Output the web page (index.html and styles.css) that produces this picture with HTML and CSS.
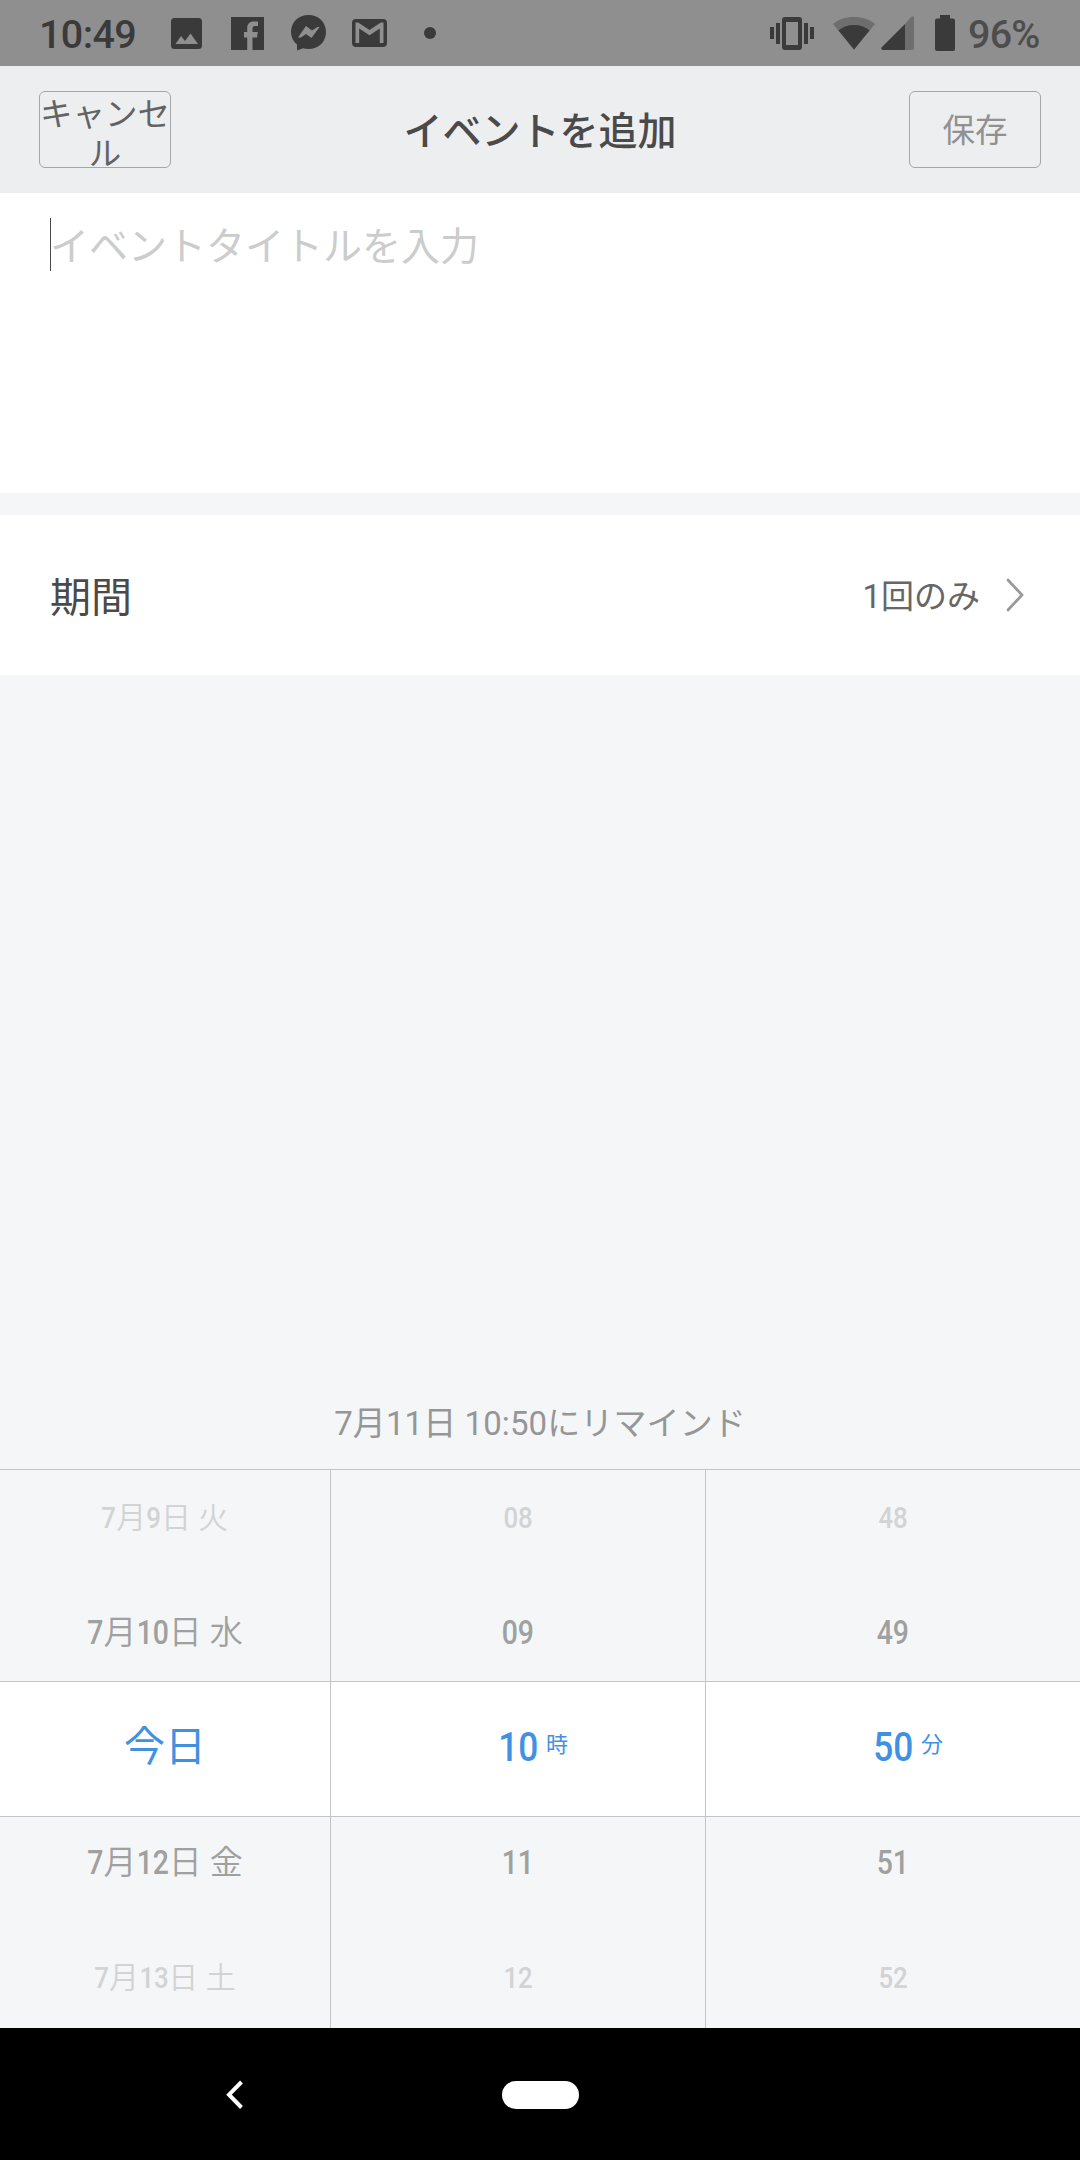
FILE: index.html
```
<!DOCTYPE html>
<html lang="ja">
<head>
  <meta charset="UTF-8">
  <meta name="viewport" content="width=device-width, initial-scale=1.0">
  <title>イベントを追加</title>
  <link rel="stylesheet" href="styles.css">
</head>
<body>
<div class="status-bar">
  <div class="status-left">
    <span class="clock">10:49</span>
    <svg class="icon-image" width="31" height="31" viewBox="0 0 31 31">
      <path fill-rule="evenodd" d="M3.500 0h24A3.500 3.500 0 0 1 31 3.500v24A3.500 3.500 0 0 1 27.500 31h-24A3.500 3.500 0 0 1 0 27.500v-24A3.500 3.500 0 0 1 3.500 0zM4.500 26H27l-7.500-10.500-5.500 7.500-4-5z"/>
    </svg>
    <svg class="icon-facebook" width="33" height="33" viewBox="0 0 33 33">
      <path d="M0 0h33v33H21.500V20.500h4.500l.8-5.500h-5.300v-3.500c0-1.700.8-2.500 2.400-2.500H27V4.500h-4.200c-4.300 0-6.600 2.400-6.600 6.500v4H13v5.500h3.200V33H0z"/>
    </svg>
    <svg class="icon-messenger" width="35" height="36" viewBox="0 0 35 36">
      <path fill-rule="evenodd" d="M17.500 0C27.500 0 35 7.300 35 17s-7.500 17-17.500 17c-2 0-3.700-.3-5.400-.8L6 35.500V29.500C2.200 26.300 0 22 0 17 0 7.300 7.500 0 17.500 0zM7 22.500l3 0 5-3.500 5.500 4L28.500 12h-2l-5.500 3.500-6-4.500z"/>
    </svg>
    <svg class="icon-gmail" width="35" height="28" viewBox="0 0 35 28">
      <path fill-rule="evenodd" d="M4 0h27a4 4 0 0 1 4 4v20a4 4 0 0 1-4 4H4a4 4 0 0 1-4-4V4a4 4 0 0 1 4-4zM3.500 3.500V24h3.700V9.500l10.300 6.800 10.300-6.800V24h3.700V3.500h-2.700L17.500 11 6.200 3.500z"/>
    </svg>
    <span class="more-dot"></span>
  </div>
  <div class="status-right">
    <svg width="44" height="33" viewBox="0 0 44 33">
      <path d="M0 10h4v12H0zM6 6h4v21H6zM34 6h4v21h-4zM40 10h4v12h-4z"/>
      <path fill-rule="evenodd" d="M15 0h14a3 3 0 0 1 3 3v27a3 3 0 0 1-3 3H15a3 3 0 0 1-3-3V3a3 3 0 0 1 3-3zM16 5v23h12V5z"/>
    </svg>
    <svg class="icon-wifi" width="42" height="33" viewBox="0 0 42 33">
      <path class="faint" d="M21 32.500L0 7C5.500 2.500 12.500 0 21 0s15.500 2.500 21 7z"/>
      <path d="M21 32.500L5.500 13.500C9.500 10 14.500 8 21 8s11.500 2 15.500 5.500z"/>
    </svg>
    <svg class="icon-signal" width="33" height="34" viewBox="0 0 33 34">
      <path class="faint" d="M33 2v30a2 2 0 0 1-2 2H24V8l6-7q3-2 3 1z"/>
      <path d="M24 8v26H2q-3-1-1-3z"/>
    </svg>
    <svg class="icon-battery" width="20" height="36" viewBox="0 0 20 36">
      <path d="M5 0h10v3.500h3a2 2 0 0 1 2 2V34a2 2 0 0 1-2 2H2a2 2 0 0 1-2-2V5.500a2 2 0 0 1 2-2h3z"/>
    </svg>
    <span class="percent">96%</span>
  </div>
</div>

<header class="header">
  <button class="btn cancel">キャンセル</button>
  <h1 class="header-title">イベントを追加</h1>
  <button class="btn save">保存</button>
</header>

<div class="title-field"><span class="caret"></span><span class="placeholder">イベントタイトルを入力</span></div>

<div class="row">
  <span class="row-label">期間</span>
  <span class="row-value">1回のみ</span>
  <svg width="18" height="34" viewBox="0 0 18 34">
    <path d="M2 2l14 15L2 32"/>
  </svg>
</div>

<div class="space">
  <p class="remind">7月11日 10:50にリマインド</p>
</div>

<div class="picker">
  <div class="picker-part before">
    <div class="col">
      <div class="item far"><span class="n1">7</span>月<span class="n1">9</span>日 火</div>
      <div class="item"><span class="n1">7</span>月<span class="n2">10</span>日 水</div>
    </div>
    <div class="col">
      <div class="item far"><span class="n2">08</span></div>
      <div class="item"><span class="n2">09</span></div>
    </div>
    <div class="col">
      <div class="item far"><span class="n2">48</span></div>
      <div class="item"><span class="n2">49</span></div>
    </div>
  </div>
  <div class="picker-part selected">
    <div class="col">
      <div class="item today">今日</div>
    </div>
    <div class="col">
      <div class="item"><span class="n2">10</span><span class="unit">時</span></div>
    </div>
    <div class="col">
      <div class="item"><span class="n2">50</span><span class="unit">分</span></div>
    </div>
  </div>
  <div class="picker-part after">
    <div class="col">
      <div class="item"><span class="n1">7</span>月<span class="n2">12</span>日 金</div>
      <div class="item far"><span class="n1">7</span>月<span class="n2">13</span>日 土</div>
    </div>
    <div class="col">
      <div class="item"><span class="n2">11</span></div>
      <div class="item far"><span class="n2">12</span></div>
    </div>
    <div class="col">
      <div class="item"><span class="n2">51</span></div>
      <div class="item far"><span class="n2">52</span></div>
    </div>
  </div>
</div>

<nav class="nav-bar">
  <svg class="back" width="18" height="30" viewBox="0 0 18 30">
    <path d="M15.500 2L3 14.700 15.500 27.500"/>
  </svg>
  <span class="home"></span>
</nav>
</body>
</html>
```
FILE: styles.css
```
:root {
  --bg-color: #f5f6f8;
  --text-color: #4a4a4a;
  --primary-color: #4191e2;
  --line-color: #c4c5c7;
  --icon-color: #3a3a3a;
}

* {
  box-sizing: border-box;
}

body {
  display: flex;
  flex-direction: column;
  width: 1080px;
  height: 2160px;
  margin: 0;
  background-color: var(--bg-color);
  color: var(--text-color);
  font-family: Roboto, 'Noto Sans CJK JP', sans-serif;
  overflow: hidden;
}

.status-bar {
  display: flex;
  justify-content: space-between;
  height: 66px;
  padding: 0 39px;
  background-color: #8f8f8f;
  color: var(--icon-color);
  fill: var(--icon-color);
}

.status-left,
.status-right {
  display: flex;
  align-items: center;
}

.clock,
.percent {
  font-size: 39.5px;
  font-weight: 500;
  line-height: 66px;
  padding-top: 3px;
}

.clock {
  width: 132px;
  letter-spacing: -0.6px;
}

.percent {
  width: 73px;
  margin-left: 13px;
  color: #4d4d4d;
  letter-spacing: -0.8px;
}

.icon-facebook {
  margin-left: 29px;
}

.icon-messenger {
  margin-left: 27px;
}

.icon-gmail {
  margin-left: 26px;
}

.more-dot {
  width: 12px;
  height: 12px;
  margin-left: 37px;
  border-radius: 50%;
  background-color: var(--icon-color);
}

.faint {
  fill: #6e6e6e;
}

.icon-wifi {
  margin-left: 19px;
}

.icon-signal {
  margin-left: 6px;
}

.icon-battery {
  margin-left: 21px;
}

.header {
  display: flex;
  align-items: center;
  justify-content: space-between;
  height: 127px;
  padding: 0 39px;
  background-color: #edeef0;
}

.header-title {
  margin: 0;
  padding-bottom: 4px;
  font-size: 39px;
  font-weight: 500;
}

.btn {
  display: flex;
  align-items: center;
  justify-content: center;
  width: 132px;
  height: 77px;
  padding: 3px 0 0;
  border: 1px solid #a5a6a8;
  border-radius: 6px;
  background: none;
  color: #636363;
  font-family: inherit;
  font-size: 32.5px;
  line-height: 39px;
}

.btn.cancel {
  align-items: flex-start;
  padding-top: 4px;
}

.btn.save {
  color: #919191;
}

.title-field {
  display: flex;
  height: 300px;
  padding: 25px 50px;
  background-color: #ffffff;
}

.caret {
  width: 1px;
  height: 53px;
  background-color: var(--text-color);
}

.placeholder {
  margin-left: -1px;
  color: #cccccc;
  font-size: 39px;
  line-height: 58px;
}

.row {
  display: flex;
  align-items: center;
  height: 160px;
  margin-top: 22px;
  padding: 0 56px 0 50px;
  background-color: #ffffff;
}

.row-label {
  flex: 1;
  padding-bottom: 3px;
  font-size: 41px;
}

.row-value {
  margin-right: 26px;
  padding-bottom: 2px;
  color: #666666;
  font-size: 33px;
}

.row svg {
  fill: none;
  stroke: #999999;
  stroke-width: 2.7;
  stroke-linecap: round;
}

.space {
  display: flex;
  flex: 1;
  align-items: flex-end;
  justify-content: center;
}

.remind {
  margin: 0 0 20px;
  color: #969696;
  font-size: 33px;
  letter-spacing: 0.1px;
  line-height: 50px;
}

.picker {
  border-top: 1px solid var(--line-color);
}

.picker-part {
  display: grid;
  grid-template-columns: 331px 375px 374px;
  height: 211px;
}

.col {
  display: flex;
  flex-direction: column;
  gap: 55px;
  border-right: 1px solid var(--line-color);
}

.col:last-child {
  border-right: none;
}

.before .col {
  padding-top: 18px;
}

.after .col {
  padding-top: 16px;
}

.item {
  height: 60px;
  color: #9fa0a0;
  font-size: 33px;
  font-weight: 350;
  line-height: 60px;
  text-align: center;
}

.item.far {
  color: #d2d3d4;
  font-size: 30px;
}

.selected {
  height: 136px;
  border-top: 1px solid var(--line-color);
  border-bottom: 1px solid var(--line-color);
  background-color: #ffffff;
}

.selected .col {
  justify-content: center;
  padding-bottom: 4px;
}

.selected .item {
  position: relative;
  color: var(--primary-color);
  font-size: 41px;
}

.selected .today {
  font-weight: 400;
}

/* narrow digits, the margins take back the width lost by scaling */
.n1,
.n2 {
  display: inline-block;
  font-weight: 500;
  transform: scaleX(0.86);
}

.n1 {
  margin: 0 -0.04em;
}

.n2 {
  margin: 0 -0.08em;
}

.unit {
  position: absolute;
  left: 215px;
  top: -2px;
  font-size: 22px;
  font-weight: 400;
}

.nav-bar {
  display: flex;
  align-items: center;
  height: 132px;
  padding: 1px 0 0 226px;
  background-color: #000000;
}

.back {
  fill: none;
  stroke: #ffffff;
  stroke-width: 4;
}

.home {
  width: 77px;
  height: 28px;
  margin-left: 258px;
  border-radius: 14px;
  background-color: #ffffff;
}
```
